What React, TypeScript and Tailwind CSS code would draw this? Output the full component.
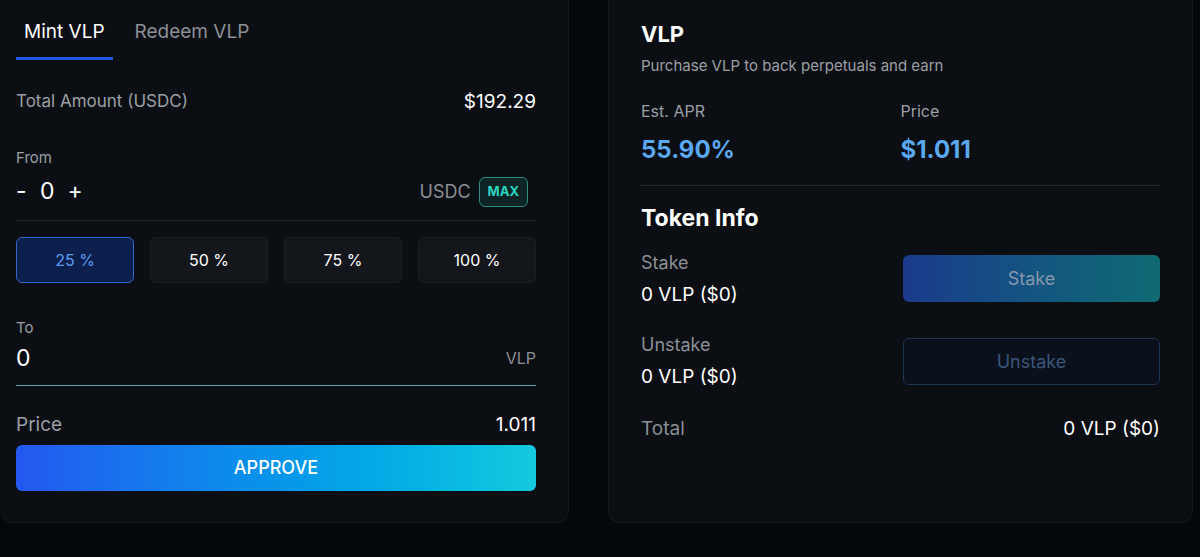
import { useState } from 'react';

const FONT = { fontFamily: 'Inter, "Noto Sans", sans-serif' };

function PercentButton({ label, active, onClick }: { label: string; active: boolean; onClick: () => void }) {
    return (
        <button
            onClick={onClick}
            className={`h-[46px] rounded-md border text-[16px] ${
                active
                    ? 'bg-[#0d1f4d] border-[#3566cc] text-[#5b9cf0]'
                    : 'bg-[#13161b] border-[#1a1d22] text-white'
            }`}
        >
            {label}
        </button>
    );
}

function MintPanel() {
    const [tab, setTab] = useState<'mint' | 'redeem'>('mint');
    const [pct, setPct] = useState(25);

    return (
        <div className="w-[569px] h-[523px] bg-[#0b0e12] rounded-b-xl border-r border-b border-[#15181d] pl-4 pr-8 flex flex-col">
            {/* Tabs */}
            <div className="flex gap-[22px] pt-[18px]">
                <button
                    onClick={() => setTab('mint')}
                    className={`relative px-2 pb-[13px] text-[19px] ${tab === 'mint' ? 'text-white' : 'text-[#8b9096]'}`}
                >
                    Mint VLP
                    {tab === 'mint' && <span className="absolute left-0 right-0 bottom-0 h-[3px] bg-[#2457dd]" />}
                </button>
                <button
                    onClick={() => setTab('redeem')}
                    className={`relative pb-[13px] text-[19px] ${tab === 'redeem' ? 'text-white' : 'text-[#8b9096]'}`}
                >
                    Redeem VLP
                </button>
            </div>

            <div className="flex items-center justify-between mt-[28px]">
                <span className="text-[17px] text-[#9ca0a6]">Total Amount (USDC)</span>
                <span className="text-[19px] text-white">$192.29</span>
            </div>

            {/* From */}
            <div className="mt-[31px] text-[15px] text-[#9ca0a6]">From</div>
            <div className="flex items-center justify-between mt-[7px] pb-[13px] border-b border-[#262a30]">
                <div className="flex items-center text-white text-[23px] leading-none">
                    <span className="w-[20px]">-</span>
                    <span className="ml-[4px]">0</span>
                    <span className="ml-[13px]">+</span>
                </div>
                <div className="flex items-center gap-[8px] mr-2">
                    <span className="text-[18px] text-[#8b9096]">USDC</span>
                    <span className="h-[30px] px-[8px] flex items-center rounded-md border border-[#2a8f80] bg-[#0c2423] text-[13px] font-bold text-[#2dd4bf]">
                        MAX
                    </span>
                </div>
            </div>

            <div className="grid grid-cols-4 gap-4 mt-[16px]">
                {[25, 50, 75, 100].map((p) => (
                    <PercentButton key={p} label={`${p} %`} active={pct === p} onClick={() => setPct(p)} />
                ))}
            </div>

            {/* To */}
            <div className="mt-[34px] text-[15px] text-[#9ca0a6]">To</div>
            <div className="flex items-center justify-between mt-[7px] pb-[15px] border-b border-[#6aa6ad]">
                <span className="text-[23px] text-white leading-none">0</span>
                <span className="text-[16px] text-[#8b9096]">VLP</span>
            </div>

            <div className="flex items-center justify-between mt-[25px]">
                <span className="text-[19px] text-[#9ca0a6]">Price</span>
                <span className="text-[19px] text-white">1.011</span>
            </div>

            <button className="mt-[5px] h-[46px] rounded-md bg-gradient-to-r from-[#2457f0] to-[#15c9dd] text-white text-[18px] font-medium">
                APPROVE
            </button>
        </div>
    );
}

function InfoPanel() {
    return (
        <div className="w-[585px] h-[523px] bg-[#0b0e12] rounded-b-xl border-x border-b border-[#15181d] px-8 flex flex-col">
            <h2 className="mt-[20px] text-[22px] font-bold text-white leading-7">VLP</h2>
            <p className="mt-[7px] text-[15px] text-[#9ca0a6]">Purchase VLP to back perpetuals and earn</p>

            <div className="grid grid-cols-2 mt-[21px]">
                <div>
                    <div className="text-[16px] text-[#9ca0a6]">Est. APR</div>
                    <div className="mt-[11px] text-[24px] font-bold text-[#5aa8f0] leading-8">55.90%</div>
                </div>
                <div>
                    <div className="text-[16px] text-[#9ca0a6]">Price</div>
                    <div className="mt-[11px] text-[24px] font-bold text-[#5aa8f0] leading-8">$1.011</div>
                </div>
            </div>

            <div className="mt-[19px] border-t border-[#23272d]" />

            <h3 className="mt-[18px] text-[23px] font-bold text-white leading-7">Token Info</h3>

            <div className="flex items-center justify-between mt-[17px]">
                <div>
                    <div className="text-[18px] text-[#8b9096]">Stake</div>
                    <div className="mt-[5px] text-[19px] text-white">0 VLP ($0)</div>
                </div>
                <button className="w-[257px] h-[47px] rounded-md bg-gradient-to-r from-[#1b3a8c] to-[#116a72] text-[18px] text-[#8797ad]">
                    Stake
                </button>
            </div>

            <div className="flex items-center justify-between mt-[22px]">
                <div>
                    <div className="text-[18px] text-[#8b9096]">Unstake</div>
                    <div className="mt-[5px] text-[19px] text-white">0 VLP ($0)</div>
                </div>
                <button className="w-[257px] h-[47px] rounded-md border border-[#1f3558] bg-[#0a111d] text-[18px] text-[#3c5679]">
                    Unstake
                </button>
            </div>

            <div className="flex items-center justify-between mt-[23px]">
                <span className="text-[19px] text-[#8b9096]">Total</span>
                <span className="text-[19px] text-white">0 VLP ($0)</span>
            </div>
        </div>
    );
}

export default function App() {
    return (
        <div className="w-[1200px] h-[557px] bg-[#04070c] flex gap-[39px]" style={FONT}>
            <MintPanel />
            <InfoPanel />
        </div>
    );
}
